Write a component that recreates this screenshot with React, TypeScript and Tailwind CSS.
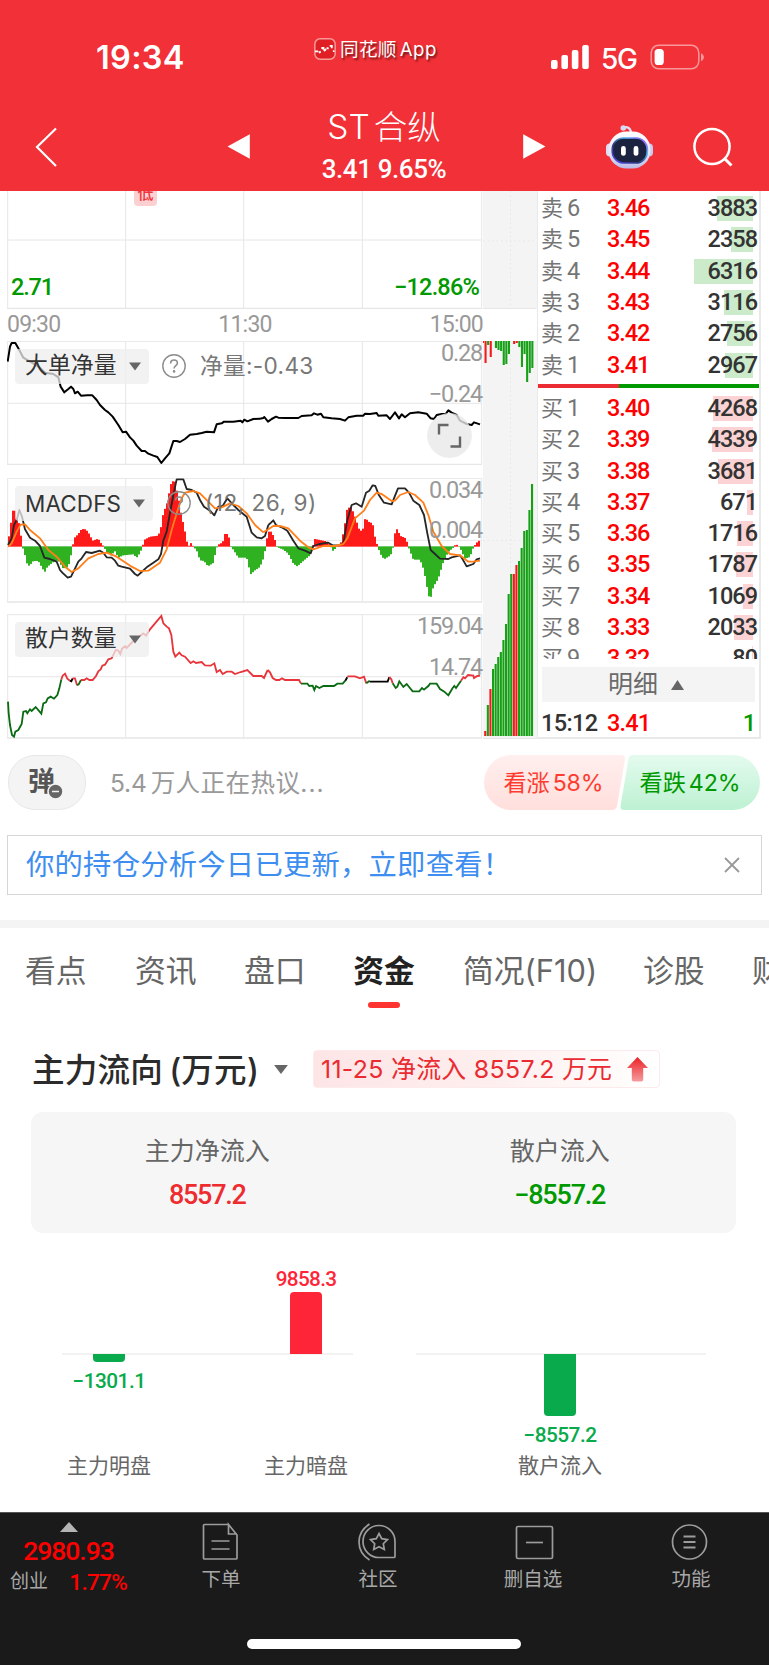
import React from 'react';

const NUM = "font-['Roboto','Noto_Sans_CJK_SC',sans-serif]";
const UI = "font-['Inter','Noto_Sans_CJK_SC',sans-serif]";

interface Order {
  label: string;
  price: string;
  qty: number;
}

const sells: Order[] = [
  { label: '卖6', price: '3.46', qty: 3883 },
  { label: '卖5', price: '3.45', qty: 2358 },
  { label: '卖4', price: '3.44', qty: 6316 },
  { label: '卖3', price: '3.43', qty: 3116 },
  { label: '卖2', price: '3.42', qty: 2756 },
  { label: '卖1', price: '3.41', qty: 2967 },
];

const buys: Order[] = [
  { label: '买1', price: '3.40', qty: 4268 },
  { label: '买2', price: '3.39', qty: 4339 },
  { label: '买3', price: '3.38', qty: 3681 },
  { label: '买4', price: '3.37', qty: 671 },
  { label: '买5', price: '3.36', qty: 1716 },
  { label: '买6', price: '3.35', qty: 1787 },
  { label: '买7', price: '3.34', qty: 1069 },
  { label: '买8', price: '3.33', qty: 2033 },
  { label: '买9', price: '3.32', qty: 80 },
];

// Chart data is kept at 3 units per css pixel. Every series comes in a morning and an
// afternoon half, the second one is shifted right by HALF.
const HALF = 780;

const bigOrderAm = '23,530 30,485 35,474 46,474 55,490 70,518 85,527 105,538 120,548 135,563 160,567 175,577 182,605 193,622 205,612 213,605 220,612 225,625 233,620 243,632 262,631 277,631 290,645 300,660 315,675 325,682 338,695 355,720 368,742 378,740 390,757 400,767 410,782 425,798 435,798 445,806 460,812 472,816 484,834 495,820 508,805 520,768 530,768 540,771 555,762 570,749 590,747 605,744 620,740 642,742 650,718 665,715 672,710 700,710 722,707 727,712 733,704 742,709 760,702 780,701';
const bigOrderPm = '0,701 10,699 13,696 24,710 35,702 48,695 55,698 75,699 115,699 125,693 155,691 162,685 172,689 183,686 190,697 215,700 240,702 255,707 265,697 290,692 310,692 315,686 330,687 350,684 355,692 380,691 390,702 405,682 417,700 425,688 435,697 450,685 475,682 500,686 512,700 522,702 530,690 545,687 558,686 565,676 575,683 590,690 600,707 620,717 635,720 642,712 660,718';

const difAm = '24,225 35,205 42,165 50,150 58,120 66,140 75,178 90,203 105,212 120,228 133,263 150,267 170,275 180,300 187,308 203,323 213,320 222,302 235,275 245,265 258,246 275,249 300,242 310,248 320,262 335,263 345,272 355,287 365,290 390,296 405,312 413,317 425,306 440,292 460,278 475,268 483,252 490,212 500,185 508,140 520,75 530,28 550,28 560,57 575,60 590,68 600,90 612,110 630,122 643,136 655,110 668,108 682,85 700,105 715,120 740,140 755,188 770,202 785,205 795,198 805,165';
const difPm = '25,165 33,158 40,151 48,165 65,172 82,182 100,212 115,235 135,242 152,250 160,228 178,222 205,218 218,226 235,226 250,220 262,150 275,105 288,100 305,110 318,68 328,62 338,46 346,48 356,74 372,98 395,103 404,80 414,55 435,55 447,68 460,92 478,105 492,135 502,190 512,240 525,252 540,266 565,267 575,262 600,256 608,268 620,289 640,282 650,268 660,265';
const deaAm = '25,230 35,220 50,185 62,164 75,163 90,180 120,205 145,240 170,260 195,290 215,306 235,295 265,265 295,252 320,248 350,260 395,290 420,303 445,302 480,278 500,238 515,180 530,130 545,85 555,68 580,63 600,70 645,115 665,112 690,100 715,108 740,130 765,165 790,187';
const deaPm = '10,187 25,178 40,168 60,168 85,175 120,212 145,232 160,238 190,228 225,228 250,222 262,205 285,145 312,122 330,90 350,68 365,72 395,93 405,92 420,75 445,66 465,75 490,98 505,135 520,185 545,228 570,252 600,256 625,275 640,275 660,272';

const ZERO = 229;
const histAm: number[][] = [[24, 218], [30, 180], [38, 122], [46, 122], [52, 150], [60, 165], [66, 229], [72, 240], [80, 278], [88, 287], [100, 272], [115, 272], [125, 290], [134, 306], [142, 290], [160, 275], [175, 270], [190, 295], [205, 290], [212, 260], [218, 229], [222, 205], [235, 192], [245, 177], [258, 178], [268, 192], [278, 212], [295, 206], [305, 222], [312, 230], [320, 245], [333, 255], [345, 243], [355, 262], [370, 255], [400, 252], [410, 262], [420, 248], [428, 229], [432, 210], [450, 200], [475, 197], [485, 165], [490, 128], [500, 105], [508, 65], [515, 33], [525, 35], [535, 80], [545, 140], [552, 168], [560, 212], [566, 229], [572, 218], [580, 229], [590, 240], [600, 270], [612, 272], [624, 288], [640, 278], [648, 240], [653, 225], [668, 217], [675, 192], [685, 192], [692, 229], [700, 238], [715, 262], [740, 262], [752, 312], [765, 300], [780, 290], [790, 265], [798, 229]];
const histPm: number[][] = [[20, 210], [25, 185], [35, 185], [45, 210], [48, 229], [70, 238], [85, 250], [100, 280], [112, 288], [130, 272], [150, 255], [158, 229], [165, 207], [200, 214], [212, 229], [220, 243], [228, 232], [245, 215], [255, 160], [262, 113], [275, 113], [285, 140], [300, 185], [310, 175], [316, 142], [325, 155], [338, 160], [345, 200], [353, 229], [362, 252], [372, 267], [392, 255], [400, 229], [405, 190], [410, 176], [422, 198], [438, 205], [445, 229], [460, 268], [480, 268], [492, 300], [500, 345], [510, 392], [520, 350], [535, 325], [550, 275], [565, 245], [580, 232], [588, 222], [600, 232], [615, 265], [630, 260], [640, 232], [650, 218], [660, 210]];
const hist = [...histAm, ...histPm.map(([x, y]) => [x + HALF, y])];

const valueAt = (x: number) => {
  const i = hist.findIndex((p) => p[0] >= x);
  if (i <= 0) return hist[0][1];
  const [x0, y0] = hist[i - 1];
  const [x1, y1] = hist[i];
  return y0 + ((y1 - y0) * (x - x0)) / (x1 - x0);
};

const histBars = Array.from({ length: 236 }, (_, i) => {
  const x = 24 + i * 6;
  return { x, y: valueAt(x + 3) };
});

const RED = '#e8353b';
const DARK = '#0b6b12';
const retail: { color: string; pm?: boolean; points: string }[] = [
  { color: DARK, points: '24,695 26,730 30,765 36,795 42,800 46,785 55,780 65,762 70,725 78,723 82,730 90,718 95,723 107,711 124,731 130,700 138,697 143,685 152,680 162,686 172,675 178,655 184,628' },
  { color: RED, points: '184,628 188,617 195,611 202,626 210,632' },
  { color: '#000', points: '210,632 214,634 218,625' },
  { color: RED, points: '218,625 225,625 231,646' },
  { color: DARK, points: '231,646 236,643 243,630' },
  { color: RED, points: '243,630 253,630 260,625 268,630 278,630 288,618 295,604 302,598 307,587 315,584 325,568 335,565 347,540 355,542 361,552 366,536 375,529 380,534 400,513 430,490 438,497 450,478 484,438 490,460 500,470 507,475 514,495 520,545 526,560 538,548 545,556 555,560 572,579 580,574 588,579 605,576 615,586 632,587 643,580 650,606 660,600 668,612 680,605 695,605 705,612 722,606 742,600 760,618 785,618 792,624 803,600' },
  { color: RED, pm: true, points: '23,600 30,607 38,624 48,630 58,630 66,625 75,630 117,630 123,641' },
  { color: DARK, pm: true, points: '123,641 142,641 148,648 158,647 163,660 168,648 178,654 190,648 222,648 232,641 248,641 256,632' },
  { color: '#000', pm: true, points: '256,632 262,622' },
  { color: RED, pm: true, points: '262,619 285,619 300,625 312,620 319,640' },
  { color: DARK, pm: true, points: '319,640 329,632' },
  { color: '#000', pm: true, points: '329,635 383,635 388,621' },
  { color: RED, pm: true, points: '388,621 394,628 398,640' },
  { color: DARK, pm: true, points: '398,640 407,654 412,650 418,634 430,651 440,642 458,664 478,664 486,654 492,659 505,648 510,641 530,641 540,657 553,665 565,676 578,654 583,648 588,654 603,632' },
  { color: RED, pm: true, points: '603,632 610,622 615,625 624,615 640,617 642,624 652,618 660,617' },
];

// side histogram: r/g = colour, number = bar length
const sideTop = ['r2', 'r22', 'g4', 'r16', '', 'g7', 'g9', 'g10', 'g24', 'g23', 'g13', '', 'r3', 'r2', 'g6', 'g26', 'g13', 'g41', 'g32', 'g27'];
const sideBottom = ['r5', 'g31', 'r47', 'g67', 'g72', 'g79', 'g84', 'g96', 'g112', 'g142', 'g162', 'r162', 'r171', 'g175', 'g188', 'g205', 'g206', 'g226', 'g252'];

const Grid = ({ top, mid, bottom }: { top?: number; mid: number; bottom: number }) => (
  <g stroke="#e6e6e6" strokeWidth="3" fill="none">
    {top !== undefined && <path d={`M21 ${top}H1446`} />}
    <path d={`M21 ${mid}H1446`} />
    <path d={`M21 ${bottom}H1446`} strokeWidth="4" />
    {[23, 377, 731, 1087, 1445].map((x) => (
      <path key={x} d={`M${x} ${top ?? 0}V${bottom}`} />
    ))}
  </g>
);

const Caret = ({ className = '' }: { className?: string }) => (
  <svg className={className} width="12" height="9" viewBox="0 0 12 9">
    <path d="M0 0.5H12L6 8.5Z" fill="#666" />
  </svg>
);

const Help = () => (
  <svg width="24" height="24" viewBox="0 0 24 24" fill="none" stroke="#8c8c8c" strokeWidth="1.4">
    <circle cx="12" cy="12" r="11.2" />
    <path d="M8.6 9.4C8.6 7.3 10 6 12 6s3.4 1.3 3.4 3.2c0 2.4-3.3 2.6-3.3 5.2" strokeWidth="1.6" />
    <circle cx="12.1" cy="17.4" r="0.6" fill="#8c8c8c" />
  </svg>
);

const Picker = ({ text, className }: { text: string; className: string }) => (
  <div className={`flex h-[35px] items-center justify-between rounded bg-[#ededed]/75 pr-[8px] pl-[10px] text-[#333] ${className}`}>
    <span className="whitespace-nowrap">{text}</span>
    <Caret />
  </div>
);

const AxisValue = ({ text, className }: { text: string; className: string }) => (
  <span className={`absolute right-[1px] leading-[24px] tracking-[-1.2px] text-[#999] ${className}`}>{text}</span>
);

const StatusBar = () => (
  <div className="flex h-[100px] items-start">
    <span className={`${UI} ml-[96px] w-[218px] pt-[42px] text-[32.5px] leading-[32px] font-semibold tracking-[0.3px]`}>19:34</span>
    <div className="flex w-[236px] items-center pt-[38px]">
      <svg width="22" height="22" viewBox="0 0 21 21" fill="none">
        <rect x="0.8" y="0.8" width="19.4" height="19.4" rx="5" fill="#e01f24" stroke="#f79a9a" strokeWidth="1.4" />
        <path d="M1 12.8h3M4.5 14l2-1M7 9.5h2v1.6M9.5 12.5l2-2M12 9.5l2 .6M15 7.5h2v2.2M18 12.5h1.5" stroke="#fff" strokeWidth="1.8" />
      </svg>
      <span className={`${UI} ml-[4px] text-[18.6px] leading-[22px] tracking-[0.3px] whitespace-nowrap [text-shadow:1.5px_1.5px_2px_rgba(0,0,0,0.55)]`}>
        同花顺<span className="ml-[3px] tracking-[0.6px]">App</span>
      </span>
    </div>
    <svg className="mt-[45px]" width="39" height="24" viewBox="0 0 39 24" fill="#fff">
      <rect x="1" y="15" width="6.6" height="9" rx="2" />
      <rect x="11.4" y="10" width="6.6" height="14" rx="2" />
      <rect x="21.8" y="5" width="6.6" height="19" rx="2" />
      <rect x="32.2" y="0" width="6.6" height="24" rx="2" />
    </svg>
    <span className={`${UI} ml-[12px] w-[49px] pt-[45px] text-[28px] leading-[28px] font-medium tracking-[-1.2px]`}>5G</span>
    <svg className="mt-[44px]" width="55" height="26" viewBox="0 0 55 26">
      <rect x="1.2" y="1.2" width="47.6" height="23.6" rx="7.5" fill="none" stroke="#f9989b" strokeWidth="1.5" />
      <rect x="4.6" y="5" width="9.2" height="16" rx="3.6" fill="#fff" />
      <path d="M51 9.5c3.8 1 3.8 6.5 0 7.5z" fill="#f9989b" />
    </svg>
  </div>
);

const Robot = () => (
  <svg width="49" height="46" viewBox="0 0 49 46">
    <defs>
      <linearGradient id="shell" x1="0" y1="0" x2="0" y2="1">
        <stop offset="0" stopColor="#fff" />
        <stop offset="0.6" stopColor="#e6e4f8" />
        <stop offset="1" stopColor="#b9bbe6" />
      </linearGradient>
      <linearGradient id="rim" x1="0" y1="1" x2="1" y2="0">
        <stop offset="0" stopColor="#5b4bff" />
        <stop offset="0.4" stopColor="#2a3a7a" />
        <stop offset="0.7" stopColor="#58b7f2" />
        <stop offset="1" stopColor="#a63cff" />
      </linearGradient>
    </defs>
    <path d="M18 3.5c4-1 7.5 0 8 5" fill="none" stroke="#e4e3f6" strokeWidth="2.2" />
    <circle cx="18.3" cy="4" r="2.8" fill="#d9d8f3" />
    <rect x="1" y="19.5" width="8" height="13" rx="4" fill="#dedef4" />
    <rect x="40" y="19.5" width="8" height="13" rx="4" fill="#c9caec" />
    <rect x="3.5" y="7.5" width="42" height="37" rx="18" fill="url(#shell)" />
    <rect x="7.3" y="14" width="35" height="25" rx="11.5" fill="#1c2340" stroke="url(#rim)" strokeWidth="1.7" />
    <rect x="16" y="22" width="4.8" height="9.8" rx="2.4" fill="#fff" />
    <rect x="28.6" y="22" width="4.8" height="9.8" rx="2.4" fill="#fff" />
  </svg>
);

const TitleBar = () => (
  <div className="flex h-[91px] items-start">
    <svg className="mt-[27px] ml-[35px]" width="23" height="40" viewBox="0 0 23 40" fill="none" stroke="#fff" strokeWidth="2.2">
      <path d="M21 1.5L2 20L21 39" />
    </svg>
    <svg className="mt-[34px] ml-[169px]" width="23" height="25" viewBox="0 0 23 25">
      <path d="M0.5 12.5L22.8 0.2V24.7Z" fill="#fff" />
    </svg>
    <div className="ml-[49px] flex w-[170px] flex-col items-center">
      <h1 className={`${UI} mt-[8px] text-[33.5px] leading-[38px] font-light whitespace-nowrap`}>
        <span className="mr-[4px]">ST</span>合纵
      </h1>
      <p className={`${NUM} mt-[9px] text-[26px] leading-[28px] font-medium tracking-[-0.4px] whitespace-nowrap`}>3.41 9.65%</p>
    </div>
    <svg className="mt-[34px] ml-[54px]" width="23" height="25" viewBox="0 0 23 25">
      <path d="M22.5 12.5L0.2 0.2V24.7Z" fill="#fff" />
    </svg>
    <div className="mt-[24px] ml-[59px]"><Robot /></div>
    <svg className="mt-[27px] ml-[39px]" width="42" height="42" viewBox="0 0 42 42" fill="none" stroke="#fff" strokeWidth="2.5">
      <circle cx="19" cy="19.5" r="17.6" />
      <path d="M31.5 31.5L38.5 38.5" strokeWidth="3" />
    </svg>
  </div>
);

const Charts = () => (
  <div className={`${NUM} ml-[7px] w-[476px] text-[23.5px]`}>
    <div className="relative h-[118px]">
      <svg className="block" width="476" height="119" viewBox="21 18 1428 357">
        <Grid mid={165} bottom={370} />
      </svg>
      <div className="absolute top-0 left-[127px] h-[15px] w-[23px] overflow-hidden rounded-b-sm bg-[#fcd0d1]">
        <span className="-mt-[6px] block text-center text-[16px] leading-[18px] font-medium text-[#f0323a]">低</span>
      </div>
      <span className="absolute top-[84px] left-[4px] leading-[24px] font-medium tracking-[-1.2px] text-[#009900]">2.71</span>
      <span className="absolute top-[84px] right-[4px] leading-[24px] font-medium tracking-[-0.8px] text-[#009900]">−12.86%</span>
    </div>
    <div className="flex h-[32px] items-center justify-between pt-[1px] text-[23px] tracking-[-0.8px] text-[#999]">
      <span>09:30</span>
      <span>11:30</span>
      <span>15:00</span>
    </div>
    <div className="relative h-[124px]">
      <svg className="block" width="476" height="124" viewBox="21 468 1428 372">
        <Grid top={469} mid={655} bottom={838} />
        <g fill="none" stroke="#000" strokeWidth="6" strokeLinejoin="round">
          <polyline points={bigOrderAm} />
          <polyline points={bigOrderPm} transform={`translate(${HALF})`} />
        </g>
      </svg>
      <Picker text="大单净量" className="absolute top-[8px] left-[8px] w-[134px] text-[22.9px]" />
      <div className={`${UI} absolute top-[13px] left-[155px] flex items-center gap-[14px] text-[22.6px] leading-[24px] tracking-[0.35px] text-[#777]`}>
        <Help />
        <span className="whitespace-nowrap">净量:-0.43</span>
      </div>
      <AxisValue text="0.28" className="top-0" />
      <AxisValue text="−0.24" className="top-[41px]" />
      <svg className="absolute top-[72px] left-[420px]" width="45" height="45" viewBox="0 0 45 45">
        <circle cx="22.5" cy="22.5" r="22.4" fill="#e9e9e9" fillOpacity="0.8" />
        <path d="M12 21.5V12H21.5M33 23.5V33.5H23.5" fill="none" stroke="#666" strokeWidth="2.4" />
      </svg>
    </div>
    <div className="relative mt-[13px] h-[124px]">
      <svg className="block" width="476" height="126" viewBox="21 24 1428 378">
        <Grid top={25} mid={211} bottom={396} />
        {histBars.map(({ x, y }) => (
          <rect key={x} x={x} y={Math.min(y, ZERO)} width="6" height={Math.abs(y - ZERO) + 1} fill={y < ZERO ? '#ff1a1a' : '#2fb122'} />
        ))}
        <g fill="none" strokeWidth="5.5" strokeLinejoin="round">
          <g stroke="#262626">
            <polyline points={difAm} />
            <polyline points={difPm} transform={`translate(${HALF})`} />
          </g>
          <g stroke="#ff7f1a">
            <polyline points={deaAm} />
            <polyline points={deaPm} transform={`translate(${HALF})`} />
          </g>
        </g>
      </svg>
      <Picker text="MACDFS" className={`${UI} absolute top-[8px] left-[8px] w-[138px] text-[22.5px] tracking-[0.1px]`} />
      <div className={`${UI} absolute top-[13px] left-[160px] flex items-center gap-[14px] text-[22.6px] leading-[24px] tracking-[0.5px] text-[#777]`}>
        <Help />
        <span className="whitespace-nowrap">(12, 26, 9)</span>
      </div>
      <AxisValue text="0.034" className="top-0" />
      <AxisValue text="0.004" className="top-[40px]" />
    </div>
    <div className="relative mt-[12px] h-[127px]">
      <svg className="block" width="476" height="126" viewBox="21 432 1428 378">
        <Grid top={434} mid={620} bottom={804} />
        {retail.map((s, i) => (
          <polyline key={i} points={s.points} fill="none" stroke={s.color} strokeWidth="5.5" transform={s.pm ? `translate(${HALF})` : undefined} />
        ))}
      </svg>
      <Picker text="散户数量" className="absolute top-[8px] left-[8px] w-[134px] text-[22.9px]" />
      <AxisValue text="159.04" className="top-0" />
      <AxisValue text="14.74" className="top-[41px]" />
    </div>
  </div>
);

const SideStrip = () => (
  <svg className="block w-[54px] shrink-0" width="54" height="550" viewBox="483 191 54 550">
    <path d="M483 191H537V309H483ZM483 341H537V738H483Z" fill="#f4f4f4" />
    <path d="M510.5 191V309M510.5 341V738M483 241H537M483 540.5H537" stroke="#e6e6e6" strokeDasharray="1.5 3" />
    <path d="M483 308.5H536M483 738.5H537" stroke="#e6e6e6" />
    {sideTop.map((b, i) => b && (
      <rect key={i} x={481.9 + i * 2.6} y="341" width="2.1" height={Number(b.slice(1))} fill={b[0] === 'r' ? '#f51a1a' : '#15a015'} />
    ))}
    {sideBottom.map((b, i) => (
      <rect key={i} x={484.2 + i * 2.6} y={736 - Number(b.slice(1))} width="2.1" height={Number(b.slice(1))} fill={b[0] === 'r' ? '#f51a1a' : '#15a015'} />
    ))}
  </svg>
);

const OrderRow = ({ order, sell }: { order: Order; sell?: boolean }) => (
  <div className="flex h-[31.3px] shrink-0 items-center pl-[3px] leading-[31px]">
    <span className="flex w-[66px] gap-[4px] text-[#757575]">
      <span className="text-[22px]">{order.label[0]}</span>
      <span>{order.label[1]}</span>
    </span>
    <span className="font-medium tracking-[-1.1px] text-[#ff0000]">{order.price}</span>
    <div className="relative ml-auto flex h-full items-center pr-[2px]">
      <span
        className={`absolute right-[6px] h-[25px] ${sell ? 'bg-[#cbebcb]' : 'bg-[#fbd3d4]'}`}
        style={{ width: order.qty / 106.5 }}
      />
      <span className="relative font-medium tracking-[-1px] text-[#333]">{order.qty}</span>
    </div>
  </div>
);

const OrderBook = () => (
  <div className={`${NUM} flex h-[548px] w-[224px] flex-col border-r-2 border-b-2 border-l border-[#e9e9e9] text-[23.5px]`}>
    <div className="flex h-[468px] shrink-0 flex-col overflow-hidden pt-[2px]">
      {sells.map((o) => <OrderRow key={o.label} order={o} sell />)}
      <div className="mt-[3px] mb-[5px] flex h-[4px] shrink-0">
        <div className="w-[81px] bg-[#eb2d33]" />
        <div className="flex-1 bg-[#009900]" />
      </div>
      {buys.map((o) => <OrderRow key={o.label} order={o} />)}
    </div>
    <div className="mx-[4px] mt-[8px] flex h-[35px] shrink-0 items-center justify-center gap-[13px] bg-[#f4f4f4] pr-[5px] text-[25px] leading-[35px] text-[#6b6b6b]">
      明细
      <svg width="13" height="10" viewBox="0 0 13 10"><path d="M0 10L6.5 0L13 10Z" fill="#666" /></svg>
    </div>
    <div className="flex h-[35px] shrink-0 items-center pt-[6px] pr-[3px] pl-[3px] leading-[28px] font-medium">
      <span className="w-[66px] tracking-[-0.6px] text-[#333]">15:12</span>
      <span className="tracking-[-0.8px] text-[#ff0000]">3.41</span>
      <span className="ml-auto text-[#009900]">1</span>
    </div>
  </div>
);

const Discussion = () => (
  <div className={`${UI} flex h-[94px] items-start pt-[14px] pl-[8px]`}>
    <div className="relative h-[55px] w-[78px] rounded-[27px] border border-[#e8e8e8] bg-[#f4f4f4]">
      <span className="absolute top-[11px] left-[19px] text-[27px] leading-[30px] font-bold text-[#555]">弹</span>
      <svg className="absolute top-[27px] left-[38px]" width="17" height="17" viewBox="0 0 17 17">
        <circle cx="8.5" cy="8.5" r="7.5" fill="#666" stroke="#f4f4f4" strokeWidth="1.5" />
        <path d="M5 8.5H12" stroke="#f4f4f4" strokeWidth="1.5" />
      </svg>
    </div>
    <span className="ml-[24px] w-[374px] pt-[1px] text-[24.6px] leading-[55px] tracking-[0.35px] whitespace-nowrap text-[#999]">
      <span className="mr-[4px] tracking-[-0.2px]">5.4</span>万人正在热议<span className="tracking-[1px]">...</span>
    </span>
    <div className="relative flex h-[55px] w-[276px]">
      <svg className="absolute inset-0" width="276" height="55" viewBox="0 0 276 55">
        <defs>
          <linearGradient id="up" x1="0" y1="0" x2="0" y2="1">
            <stop offset="0" stopColor="#ffefee" />
            <stop offset="1" stopColor="#ffdfdc" />
          </linearGradient>
          <linearGradient id="down" x1="0" y1="0" x2="0" y2="1">
            <stop offset="0" stopColor="#e4fbee" />
            <stop offset="1" stopColor="#bdf1d3" />
          </linearGradient>
        </defs>
        <path d="M27.5 0H137Q141.5 0 141 4L133 51Q132 55 128 55H27.5A27.5 27.5 0 0 1 27.5 0Z" fill="url(#up)" />
        <path d="M149 0H248.5A27.5 27.5 0 0 1 248.5 55H140Q136 55 136.5 51L144.5 4Q145 0 149 0Z" fill="url(#down)" />
      </svg>
      <span className="relative flex w-[139px] items-center justify-center pt-[2px] text-[23.2px] tracking-[-0.1px] whitespace-nowrap text-[#ff3b30]">看涨<span className="ml-[3px]">58%</span></span>
      <span className="relative flex w-[134px] items-center justify-center pt-[2px] text-[23.2px] tracking-[-0.1px] whitespace-nowrap text-[#009900]">看跌<span className="ml-[3px]">42%</span></span>
    </div>
  </div>
);

const tabs = [
  { text: '看点', w: 'w-[110px]' },
  { text: '资讯', w: 'w-[109px]' },
  { text: '盘口', w: 'w-[109px]' },
  { text: '资金', w: 'w-[110px]', active: true },
  { text: '简况(F10)', w: 'w-[180px]' },
  { text: '诊股', w: 'w-[109px]' },
  { text: '财务', w: 'w-[62px]' },
];

const Tabs = () => (
  <div className={`${UI} flex h-[115px] items-start overflow-hidden pt-[25px] pl-[25px] text-[30.8px] leading-[36px] whitespace-nowrap text-[#666]`}>
    {tabs.map((t) => (
      <div key={t.text} className={`${t.w} shrink-0`}>
        {t.active ? (
          <div className="flex w-[62px] flex-col items-center font-bold text-[#222]">
            {t.text}
            <div className="mt-[13px] h-[6px] w-[32px] rounded-[3px] bg-[#ff3430]" />
          </div>
        ) : t.text}
      </div>
    ))}
  </div>
);

const FlowHeader = () => (
  <div className={`${UI} flex h-[62px] items-start pl-[32px]`}>
    <h2 className="mt-[2px] w-[242px] text-[32.6px] leading-[36px] font-medium tracking-[0.2px] whitespace-nowrap text-[#2b2b2b]">
      主力流向<span className="ml-[6px]">(万元)</span>
    </h2>
    <Caret className="mt-[15px] w-[14px] scale-115" />
    <div className="ml-[25px] flex h-[38px] w-[347px] items-center rounded border border-[#fdeaea] bg-linear-to-r from-[#fde5e6] via-[#feeeee] to-white pl-[7px]">
      <span className="w-[306px] text-[24.9px] leading-[36px] tracking-[0.3px] whitespace-nowrap text-[#ea2b31]">11-25 净流入 8557.2 万元</span>
      <svg width="21" height="25" viewBox="0 0 21 25">
        <defs>
          <linearGradient id="arrow" x1="0" y1="0" x2="0" y2="1">
            <stop offset="0" stopColor="#ea2026" />
            <stop offset="1" stopColor="#f59c9e" />
          </linearGradient>
        </defs>
        <path d="M10.5 0L21 11H16.2V22.5Q16.2 24.5 14.2 24.5H6.8Q4.8 24.5 4.8 22.5V11H0Z" fill="url(#arrow)" />
      </svg>
    </div>
  </div>
);

const Summary = () => (
  <div className={`${UI} mr-[33px] ml-[31px] flex h-[121px] rounded-xl bg-[#f6f6f6] pt-[22px]`}>
    <div className="flex w-1/2 flex-col items-center text-[25px] leading-[34px] text-[#666]">
      主力净流入
      <span className={`${NUM} mt-[10px] text-[27px] font-medium tracking-[-1.3px] text-[#ee2c2f]`}>8557.2</span>
    </div>
    <div className="flex w-1/2 flex-col items-center text-[25px] leading-[34px] text-[#666]">
      散户流入
      <span className={`${NUM} mt-[10px] text-[27px] font-medium tracking-[-1.2px] text-[#009900]`}>−8557.2</span>
    </div>
  </div>
);

interface FlowBarProps {
  name: string;
  value: string;
  size: string;
  up?: boolean;
}

const FlowBar = ({ name, value, size, up }: FlowBarProps) => (
  <div className="flex w-[100px] flex-col items-center">
    <div className="flex h-[101px] flex-col items-center justify-end">
      {up && <span className={`${NUM} mb-[1px] text-[20.8px] leading-[24px] font-medium tracking-[-0.7px] text-[#ff2538]`}>{value}</span>}
      {up && <div className={`w-[32px] rounded-t bg-[#ff2538] ${size}`} />}
    </div>
    <div className="flex h-[98px] flex-col items-center">
      {!up && <div className={`w-[32px] rounded-b bg-[#09aa4b] ${size}`} />}
      {!up && <span className={`${NUM} mt-[7px] text-[20.8px] leading-[24px] font-medium tracking-[-0.5px] text-[#09aa4b]`}>{value}</span>}
    </div>
    <span className="text-[21px] leading-[28px] whitespace-nowrap text-[#666]">{name}</span>
  </div>
);

const FlowChart = () => (
  <div className={`${UI} flex h-[279px] pt-[20px]`}>
    <div className="relative ml-[62px] flex w-[291px] justify-between pr-[-3px]">
      <div className="absolute top-[100px] h-[2px] w-full bg-[#f2f2f2]" />
      <div className="relative ml-[-3px]"><FlowBar name="主力明盘" value="−1301.1" size="h-[8px]" /></div>
      <div className="relative mr-[-3px]"><FlowBar name="主力暗盘" value="9858.3" size="h-[62px]" up /></div>
    </div>
    <div className="relative ml-[63px] flex w-[290px] justify-center pr-[2px]">
      <div className="absolute top-[100px] left-0 h-[2px] w-full bg-[#f2f2f2]" />
      <div className="relative"><FlowBar name="散户流入" value="−8557.2" size="h-[62px]" /></div>
    </div>
  </div>
);

const NavItem = ({ text, className, children }: { text: string; className: string; children: React.ReactNode }) => (
  <div className={`flex flex-col items-center text-[19.5px] leading-[26px] text-[#a8a8a8] ${className}`}>
    <svg width="42" height="42" viewBox="0 0 42 42" fill="none" stroke="#9c9c9c" strokeWidth="1.7">{children}</svg>
    <span className="mt-[3px] whitespace-nowrap">{text}</span>
  </div>
);

const BottomBar = () => (
  <div className={`${UI} flex h-[153px] flex-col border-t border-[#555] bg-[#1a1a1a]`}>
    <div className="flex h-[126px] items-start pt-[8px]">
      <div className="flex w-[137px] flex-col items-center">
        <svg className="mt-[1px]" width="18" height="10" viewBox="0 0 18 10"><path d="M0 10L9 0L18 10Z" fill="#b5b5b5" /></svg>
        <span className={`${NUM} mt-[5px] text-[26.5px] leading-[28px] font-medium tracking-[-1px] text-[#ff0000]`}>2980.93</span>
        <div className="mt-[4px] flex w-[117px] items-center justify-between">
          <span className="text-[19px] leading-[26px] text-[#a8a8a8]">创业</span>
          <span className={`${NUM} text-[22.5px] leading-[24px] font-medium tracking-[-0.7px] text-[#ff0000]`}>1.77%</span>
        </div>
      </div>
      <NavItem text="下单" className="ml-[34px] w-[100px]">
        <path d="M28.5 3.5H4.5Q3.5 3.5 3.5 4.5V37Q3.5 38 4.5 38H36Q37 38 37 37V14L28.5 3.5V13H37M11.5 20H29.5M11.5 28H29.5" />
      </NavItem>
      <NavItem text="社区" className="ml-[57px] w-[100px]">
        <path d="M12.5 3C-1.5 12 -1.5 30 12.500 39" />
        <path d="M22 4.5a16 16 0 0 1 16 16V35.500Q38 36.500 37 36.500H22a16 16 0 0 1 0-32Z" />
        <path d="M22 12.500L24.700 17.700L30.500 18.600L26.300 22.700L27.300 28.500L22 25.800L16.700 28.500L17.700 22.700L13.500 18.600L19.300 17.700Z" />
      </NavItem>
      <NavItem text="删自选" className="ml-[55px] w-[100px]">
        <rect x="4.500" y="5.500" width="36" height="32" rx="1.500" />
        <path d="M14 21.500H31" />
      </NavItem>
      <NavItem text="功能" className="ml-[58px] w-[100px]">
        <circle cx="19.500" cy="21" r="17" />
        <path d="M13.500 15.500H25.500M13.500 21H25.500M13.500 26.500H25.500" strokeWidth="2" />
      </NavItem>
    </div>
    <div className="ml-[247px] h-[10px] w-[274px] rounded-full bg-white" />
  </div>
);

export default function App() {
  return (
    <div className="flex h-[1665px] w-[769px] flex-col overflow-hidden bg-white">
      <header className="h-[191px] shrink-0 bg-[#f23037] text-white">
        <StatusBar />
        <TitleBar />
      </header>
      <main className="flex h-[550px] shrink-0">
        <Charts />
        <SideStrip />
        <OrderBook />
      </main>
      <Discussion />
      <div className={`${UI} mr-[7px] ml-[7px] flex h-[60px] shrink-0 items-center justify-between border border-[#d6d6d6] pr-[21px] pl-[18px]`}>
        <span className="text-[28.300px] tracking-[0.250px] text-[#3d8ef0]">你的持仓分析今日已更新，立即查看！</span>
        <svg width="16" height="16" viewBox="0 0 16 16" stroke="#999" strokeWidth="1.800"><path d="M1 1L15 15M15 1L1 15" /></svg>
      </div>
      <div className="mt-[25px] h-[8px] shrink-0 bg-[#f4f4f4]" />
      <Tabs />
      <div className="mt-[7px]"><FlowHeader /></div>
      <Summary />
      <FlowChart />
      <BottomBar />
    </div>
  );
}
